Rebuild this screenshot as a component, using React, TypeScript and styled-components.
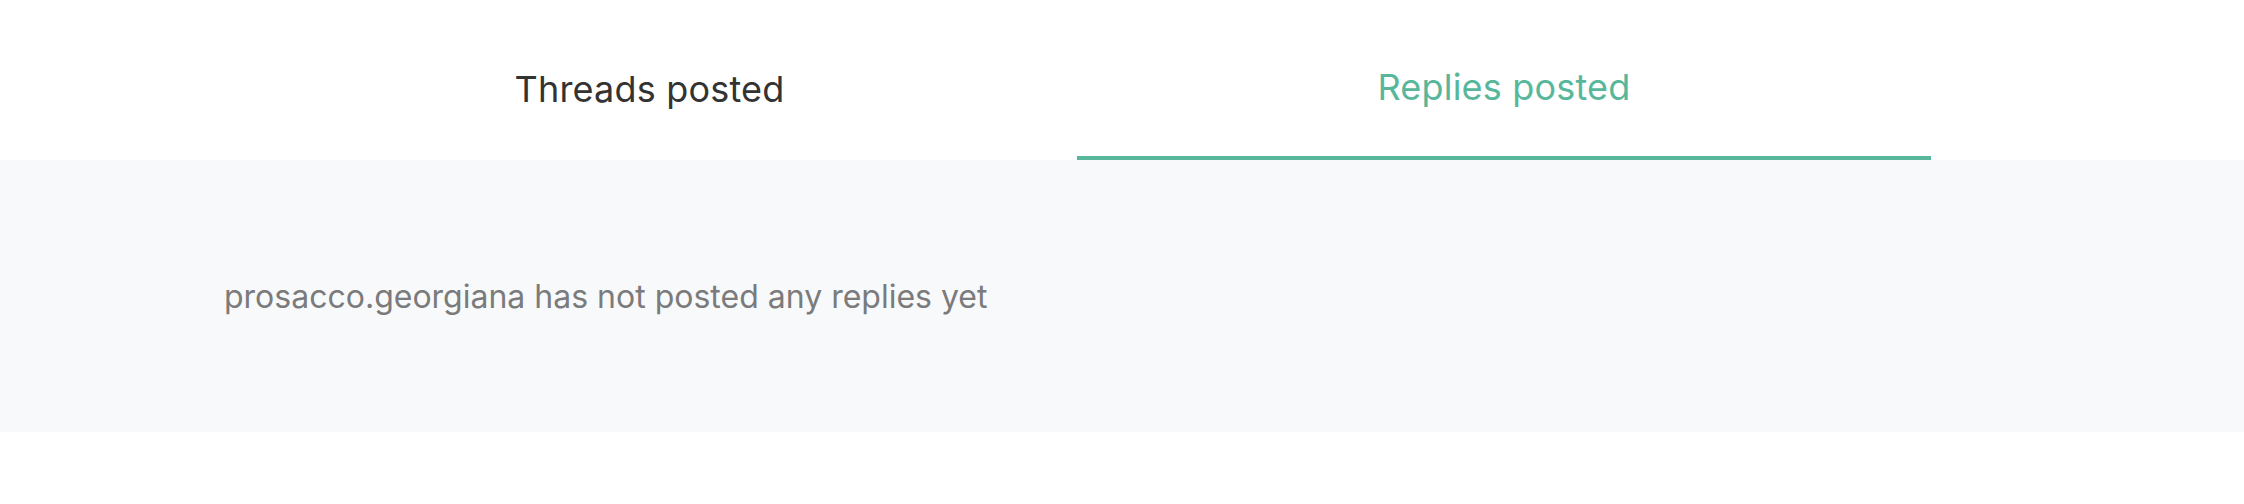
import styled, { createGlobalStyle } from "styled-components";

const GlobalStyle = createGlobalStyle`
  html, body {
    margin: 0;
    padding: 0;
    background: #ffffff;
    font-family: Inter, "Noto Sans", sans-serif;
  }
`;

const Page = styled.div`
  width: 2244px;
`;

const TabBar = styled.nav`
  display: grid;
  grid-template-columns: 855px 854px;
  padding-left: 222px;
  height: 160px;
`;

const Tab = styled.button<{ $active?: boolean }>`
  display: flex;
  align-items: center;
  justify-content: center;
  border: none;
  background: none;
  padding: 18px 0 0;
  font-family: Inter, sans-serif;
  font-size: 36px;
  font-weight: 400;
  letter-spacing: 0.2px;
  color: ${(p) => (p.$active ? "#58b79b" : "#333333")};
  border-bottom: ${(p) => (p.$active ? "4px solid #58b79b" : "none")};
  cursor: pointer;
`;

const Panel = styled.section`
  display: flex;
  align-items: center;
  height: 272px;
  padding-left: 224px;
  background: #f8f9fb;
`;

const Empty = styled.p`
  margin: 0;
  font-size: 32px;
  color: #7b7b7b;
`;

export default function App() {
  return (
    <Page>
      <GlobalStyle />
      <TabBar>
        <Tab>Threads posted</Tab>
        <Tab $active>Replies posted</Tab>
      </TabBar>
      <Panel>
        <Empty>prosacco.georgiana has not posted any replies yet</Empty>
      </Panel>
    </Page>
  );
}
